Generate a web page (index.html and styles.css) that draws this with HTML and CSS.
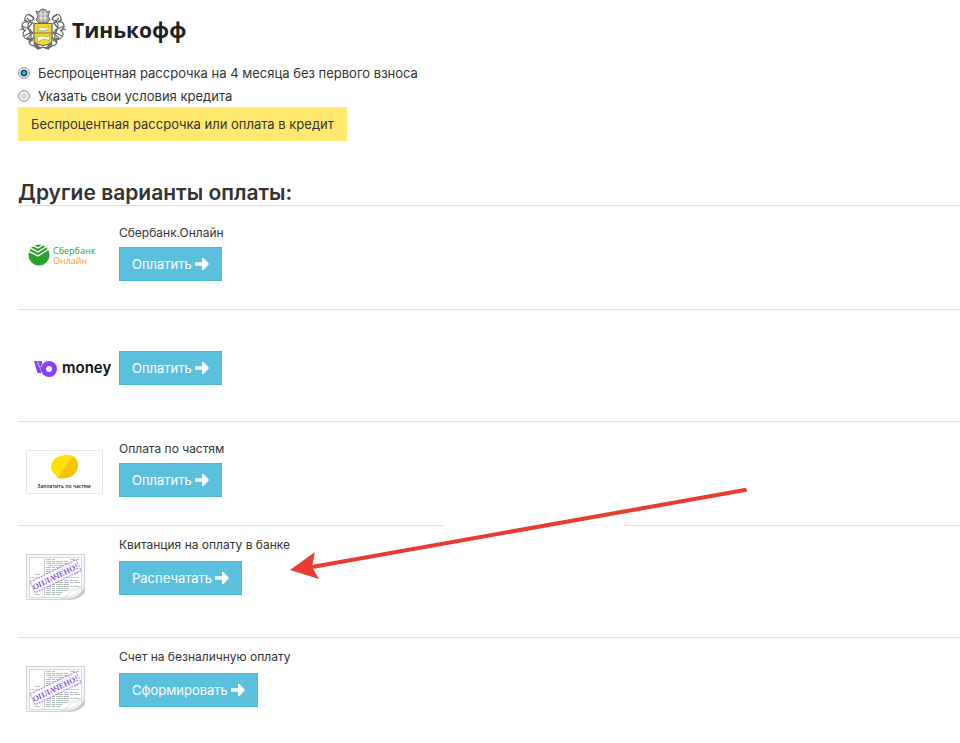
FILE: index.html
```html
<!DOCTYPE html>
<html lang="ru">
<head>
    <meta charset="UTF-8">
    <meta name="viewport" content="width=device-width, initial-scale=1.0">
    <title>Оплата заказа</title>
    <link rel="stylesheet" href="styles.css">
</head>
<body>
    <main class="payment">
        <div class="brand">
            <svg class="brand-crest" viewBox="0 0 48 44" aria-hidden="true">
                <g fill="none" stroke="#666" stroke-width="1.200">
                    <path d="M15 10q-5-6-8-2t2 6q-6-1-6 4t4 4q-5 3-2 7t6 1q-2 5 1 7t6-2q0 5 5 5"/>
                    <path d="M33 10q5-6 8-2t-2 6q6-1 6 4t-4 4q5 3 2 7t-6 1q2 5-1 7t-6-2q0 5-5 5"/>
                    <path d="M12 12q-5 4-2 10t2 11M8 10l5 6M3 18l9 4M5 28l8-4M10 35l5-6M14 14l-5 6 5 5-6 5 6 3M36 12q5 4 2 10t-2 11M40 10l-5 6M45 18l-9 4M43 28l-8-4M38 35l-5-6M34 14l5 6-5 5 6 5-6 3"/>
                    <path d="M10 7q3 1 5 4l-3 2M38 7q-3 1-5 4l3 2M14 37l5 4 5-2 5 2 5-4M15 35l5 6M33 35l-5 6M1 22l4-2M47 22l-4-2M5 12l4 2M43 12l-4 2"/>
                </g>
                <path d="M20 4q1-3 4-3t4 3l3-1-2 5 2 4-3 3h-8l-3-3 2-4-2-5z" fill="#aaa" stroke="#666"/>
                <path d="M20 6h8M20 10h8M22 3v10M26 3v10" stroke="#eee" fill="none"/>
                <path d="M15 15.500h18v17q0 4-9 5-9-1-9-5z" fill="#f4d91c" stroke="#666" stroke-width="1.200"/>
                <path d="M15 25h18" stroke="#777"/>
                <path d="M18 22l4-3 4 1 4-2-2 4-5 1zM18 29l4-1 6 1 3-2-1 6-3-2-5 1-3 2z" fill="#fff" stroke="#888" stroke-width=".6"/>
            </svg>
            <span class="brand-name">Тинькофф</span>
        </div>

        <form class="credit">
            <div class="option">
                <input type="radio" name="credit" id="installment" checked>
                <label for="installment">Беспроцентная рассрочка на 4 месяца без первого взноса</label>
            </div>
            <div class="option">
                <input type="radio" name="credit" id="custom">
                <label for="custom">Указать свои условия кредита</label>
            </div>
            <button type="button" class="btn btn-credit">Беспроцентная рассрочка или оплата в кредит</button>
        </form>

        <h2 class="title">Другие варианты оплаты:</h2>

        <section class="method method-sber">
            <div class="method-logo">
                <svg width="77" height="44" viewBox="0 0 77 44" role="img" aria-label="Сбербанк Онлайн">
                    <circle cx="13" cy="21" r="10.500" fill="#27a22d"/>
                    <path d="M0 8l12 6L26 5M0 12l12 6 14-9M0 16l12 6 14-9" fill="none" stroke="#fff" stroke-width="1.400"/>
                    <text x="27" y="20" class="sber-text sber-green">Сбербанк</text>
                    <text x="27" y="30" class="sber-text sber-orange">Онлайн</text>
                </svg>
            </div>
            <div class="method-body">
                <p class="method-name">Сбербанк.Онлайн</p>
                <button type="button" class="btn btn-info">Оплатить <svg class="arrow" viewBox="0 0 14 12"><path d="M0 4.200h7V0h1.500L14 6l-5.500 6H7V7.800H0z"/></svg></button>
            </div>
        </section>

        <section class="method method-yoo">
            <div class="method-logo">
                <svg width="88" height="24" viewBox="0 0 88 24" role="img" aria-label="ЮMoney">
                    <path d="M8 5h8v12h-4.500z" fill="#8b3ffd"/>
                    <path d="M11.500 5.500l2 6" stroke="#fff" stroke-width=".7"/>
                    <circle cx="23" cy="13" r="8.500" fill="#fff"/>
                    <path d="M15 11h3v4h-3z" fill="#8b3ffd"/>
                    <circle cx="23" cy="13" r="8" fill="#8b3ffd"/>
                    <circle cx="23" cy="13" r="3" fill="#fff"/>
                    <text x="36" y="17" class="yoo-text">money</text>
                </svg>
            </div>
            <div class="method-body">
                <button type="button" class="btn btn-info">Оплатить <svg class="arrow" viewBox="0 0 14 12"><path d="M0 4.200h7V0h1.500L14 6l-5.500 6H7V7.800H0z"/></svg></button>
            </div>
        </section>

        <section class="method method-parts">
            <div class="method-logo">
                <svg width="77" height="44" viewBox="0 0 77 44" role="img" aria-label="Заплатить по частям">
                    <rect x=".5" y=".5" width="76" height="43" fill="#fff" stroke="#e6e6e6"/>
                    <path d="M47 6C37 3 26 7 25 16q0 6 5 9l1 3z" fill="#ffe000"/>
                    <path d="M47 6l1 1q4 3 4 8c0 10-9 15-21 13z" fill="#f7c400"/>
                    <text x="38" y="38" class="parts-text">Заплатить по частям</text>
                </svg>
            </div>
            <div class="method-body">
                <p class="method-name">Оплата по частям</p>
                <button type="button" class="btn btn-info">Оплатить <svg class="arrow" viewBox="0 0 14 12"><path d="M0 4.200h7V0h1.500L14 6l-5.500 6H7V7.800H0z"/></svg></button>
            </div>
        </section>

        <section class="method method-doc">
            <div class="method-logo">
                <svg width="62" height="48" viewBox="0 0 62 48" role="img" aria-label="Квитанция">
                    <path d="M34 46q14 0 25-13v6q-7 7-15 7z" fill="#ccc"/>
                    <path d="M.5.5h58v32q-3 8-11 11-5 2-12 2H.5z" fill="#f8faf9" stroke="#cdd2d1"/>
                    <path d="M3.500 3.500h52v29q-4 4-11 4 0 5-7 7h-34z" fill="#fff" stroke="#d3dbd8"/>
                    <path d="M18.500 4v39M4 23.500h49" fill="none" stroke="#cdd5d2"/>
                    <path d="M20 5.500h10M44 5.500h10M20 7.500h22M20 9.500h32M22 11.500h28M20 13.500h30M20 15.500h34M20 17.500h24M48 17.500h6M20 19.500h32M9 20.500h6M20 26.500h32M20 28.500h34M20 30.500h24M20 32.500h33M20 34.500h24M20 36.500h22M20 38.500h18M20 40.500h15M9 40.500h6" fill="none" stroke="#b4bebb" stroke-dasharray="5 1 3 1 7 1"/>
                    <path d="M35 45q8-2 9-9 8 1 14-5-6 11-23 14z" fill="#fff" stroke="#d5d8d7" stroke-width=".7"/>
                    <g transform="rotate(-26 30 22)">
                        <rect x="4" y="16" width="51" height="12" fill="#fff" fill-opacity=".7" stroke="#a879f0" stroke-dasharray="2 1"/>
                        <text x="29" y="25" class="stamp-text">ОПЛАЧЕНО!</text>
                    </g>
                </svg>
            </div>
            <div class="method-body">
                <p class="method-name">Квитанция на оплату в банке</p>
                <button type="button" class="btn btn-info">Распечатать <svg class="arrow" viewBox="0 0 14 12"><path d="M0 4.200h7V0h1.500L14 6l-5.500 6H7V7.800H0z"/></svg></button>
            </div>
            <svg class="pointer" width="464" height="100" viewBox="0 0 464 100" aria-hidden="true">
                <path d="M154 41h181" stroke="#fff" stroke-width="3"/>
                <path d="M455 6L22 83" stroke="#e63c32" stroke-width="4" stroke-linecap="round"/>
                <path d="M0 86l25-18-3 15 7 12z" fill="#e63c32"/>
            </svg>
        </section>

        <section class="method method-doc">
            <div class="method-logo">
                <svg width="62" height="48" viewBox="0 0 62 48" role="img" aria-label="Счет">
                    <path d="M34 46q14 0 25-13v6q-7 7-15 7z" fill="#ccc"/>
                    <path d="M.5.5h58v32q-3 8-11 11-5 2-12 2H.5z" fill="#f8faf9" stroke="#cdd2d1"/>
                    <path d="M3.500 3.500h52v29q-4 4-11 4 0 5-7 7h-34z" fill="#fff" stroke="#d3dbd8"/>
                    <path d="M18.500 4v39M4 23.500h49" fill="none" stroke="#cdd5d2"/>
                    <path d="M20 5.500h10M44 5.500h10M20 7.500h22M20 9.500h32M22 11.500h28M20 13.500h30M20 15.500h34M20 17.500h24M48 17.500h6M20 19.500h32M9 20.500h6M20 26.500h32M20 28.500h34M20 30.500h24M20 32.500h33M20 34.500h24M20 36.500h22M20 38.500h18M20 40.500h15M9 40.500h6" fill="none" stroke="#b4bebb" stroke-dasharray="5 1 3 1 7 1"/>
                    <path d="M35 45q8-2 9-9 8 1 14-5-6 11-23 14z" fill="#fff" stroke="#d5d8d7" stroke-width=".7"/>
                    <g transform="rotate(-26 30 22)">
                        <rect x="4" y="16" width="51" height="12" fill="#fff" fill-opacity=".7" stroke="#a879f0" stroke-dasharray="2 1"/>
                        <text x="29" y="25" class="stamp-text">ОПЛАЧЕНО!</text>
                    </g>
                </svg>
            </div>
            <div class="method-body">
                <p class="method-name">Счет на безналичную оплату</p>
                <button type="button" class="btn btn-info">Сформировать <svg class="arrow" viewBox="0 0 14 12"><path d="M0 4.200h7V0h1.500L14 6l-5.500 6H7V7.800H0z"/></svg></button>
            </div>
        </section>
    </main>
</body>
</html>
```

FILE: styles.css
```css
* {
    margin: 0;
    padding: 0;
    box-sizing: border-box;
}

body {
    background: #fff;
    color: #333;
    font-family: Inter, Roboto, sans-serif;
    font-size: 13px;
    line-height: 20px;
}

.payment {
    padding: 8px 0 0 18px;
}

.brand {
    display: flex;
    align-items: center;
    gap: 4px;
    height: 44px;
}

.brand-crest {
    width: 50px;
    height: 44px;
}

.brand-name {
    font-family: "Open Sans", sans-serif;
    font-size: 21px;
    font-weight: 700;
    color: #222;
}

.credit {
    padding-top: 9px;
}

.option {
    display: flex;
    align-items: center;
    gap: 8px;
    height: 23px;
}

.option input {
    appearance: none;
    width: 12px;
    height: 12px;
    border: 1px solid #8e8f8f;
    border-radius: 50%;
    background: radial-gradient(circle, #d5d8db 0 2px, #f4f4f4 5px);
}

.option input:checked {
    background: radial-gradient(circle, #3fb5e8 0 1px, #12405f 3px, #f4f4f4 4px);
}

.btn {
    display: inline-flex;
    align-items: center;
    gap: 3px;
    height: 34px;
    padding: 0 12px;
    border: 1px solid transparent;
    font: inherit;
    cursor: pointer;
}

.btn-credit {
    background: #ffe96f;
    color: #333;
}

.btn-info {
    background: #5bc0de;
    border-color: #46b8da;
    color: #fff;
}

.arrow {
    width: 14px;
    height: 12px;
    fill: #fff;
}

.title {
    margin-top: 40px;
    border-bottom: 1px solid #ddd;
    font-size: 21px;
    font-weight: 600;
    line-height: 24px;
}

.method {
    position: relative;
    display: flex;
    border-bottom: 1px solid #ddd;
}

.method:last-child {
    border-bottom: none;
}

.method-logo {
    flex: none;
    width: 101px;
    padding-left: 8px;
}

.method-logo svg {
    display: block;
}

.method-name {
    font-size: 12px;
    line-height: 18px;
}

.method-sber,
.method-parts {
    min-height: 104px;
    padding-top: 18px;
}

.method-sber .method-logo,
.method-parts .method-logo {
    padding-top: 10px;
}

.method-sber .btn,
.method-parts .btn {
    margin-top: 5px;
}

.method-yoo {
    min-height: 112px;
    padding-top: 4px;
    align-items: center;
}

.method-doc {
    min-height: 112px;
    padding-top: 10px;
}

.method-doc .method-logo {
    padding-top: 18px;
}

.method-doc .btn {
    margin-top: 7px;
}

.pointer {
    position: absolute;
    left: 272px;
    top: -42px;
}

.stamp-text {
    font-family: "Liberation Serif", serif;
    font-size: 8px;
    font-weight: 700;
    fill: #8e56e0;
    text-anchor: middle;
}

.sber-text {
    font-family: "Open Sans", sans-serif;
    font-size: 9px;
    font-weight: 500;
}

.sber-green {
    fill: #27a22d;
}

.sber-orange {
    fill: #f7941d;
}

.yoo-text {
    font-family: Inter, sans-serif;
    font-size: 15px;
    font-weight: 600;
    fill: #111;
}

.parts-text {
    font-family: "Open Sans", sans-serif;
    font-size: 5px;
    font-weight: 600;
    fill: #222;
    text-anchor: middle;
}
```
